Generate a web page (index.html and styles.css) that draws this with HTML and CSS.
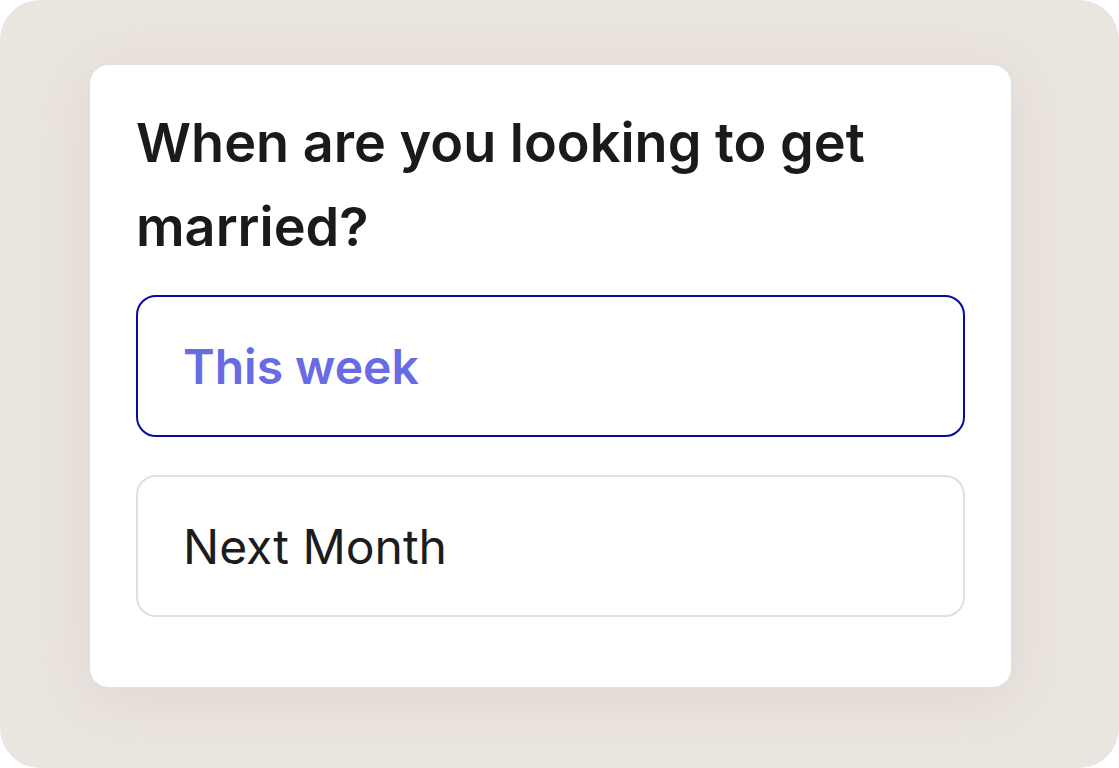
FILE: index.html
```html
<!DOCTYPE html>
<html lang="en">
<head>
<meta charset="utf-8">
<title>When are you looking to get married?</title>
<link rel="stylesheet" href="styles.css">
</head>
<body>
<div class="panel">
  <div class="card">
    <h1 class="question">When are you looking to get married?</h1>
    <div class="options">
      <button class="option option-selected">This week</button>
      <button class="option">Next Month</button>
    </div>
  </div>
</div>
</body>
</html>
```
FILE: styles.css
```css
html, body {
  margin: 0;
  padding: 0;
  background: #ffffff;
}
body {
  font-family: Inter, "Noto Sans", sans-serif;
}
.panel {
  width: 1119px;
  height: 768px;
  box-sizing: border-box;
  border-radius: 40px;
  background: #ebe5e0;
  padding: 64px 107px 80px 89px;
}
.card {
  height: 100%;
  box-sizing: border-box;
  background: #ffffff;
  border: 1px solid #e4dfda;
  border-radius: 20px;
  box-shadow: 0 10px 60px rgba(120, 100, 80, 0.12);
  padding: 36px 46px 0 46px;
}
.question {
  margin: 0 0 26px 0;
  font-size: 54px;
  line-height: 84px;
  font-weight: 600;
  color: #1a1a1a;
  letter-spacing: 0;
}
.options {
  display: flex;
  flex-direction: column;
  gap: 38px;
}
.option {
  display: flex;
  align-items: center;
  height: 142px;
  box-sizing: border-box;
  border: 2px solid #e3dfda;
  border-radius: 20px;
  background: #ffffff;
  padding: 0 0 0 45px;
  font-family: Inter, "Noto Sans", sans-serif;
  font-size: 48px;
  font-weight: 400;
  color: #1c1c1c;
  text-align: left;
}
.option-selected {
  border-color: #0a0aa3;
  color: #676be4;
  font-weight: 600;
}
```
